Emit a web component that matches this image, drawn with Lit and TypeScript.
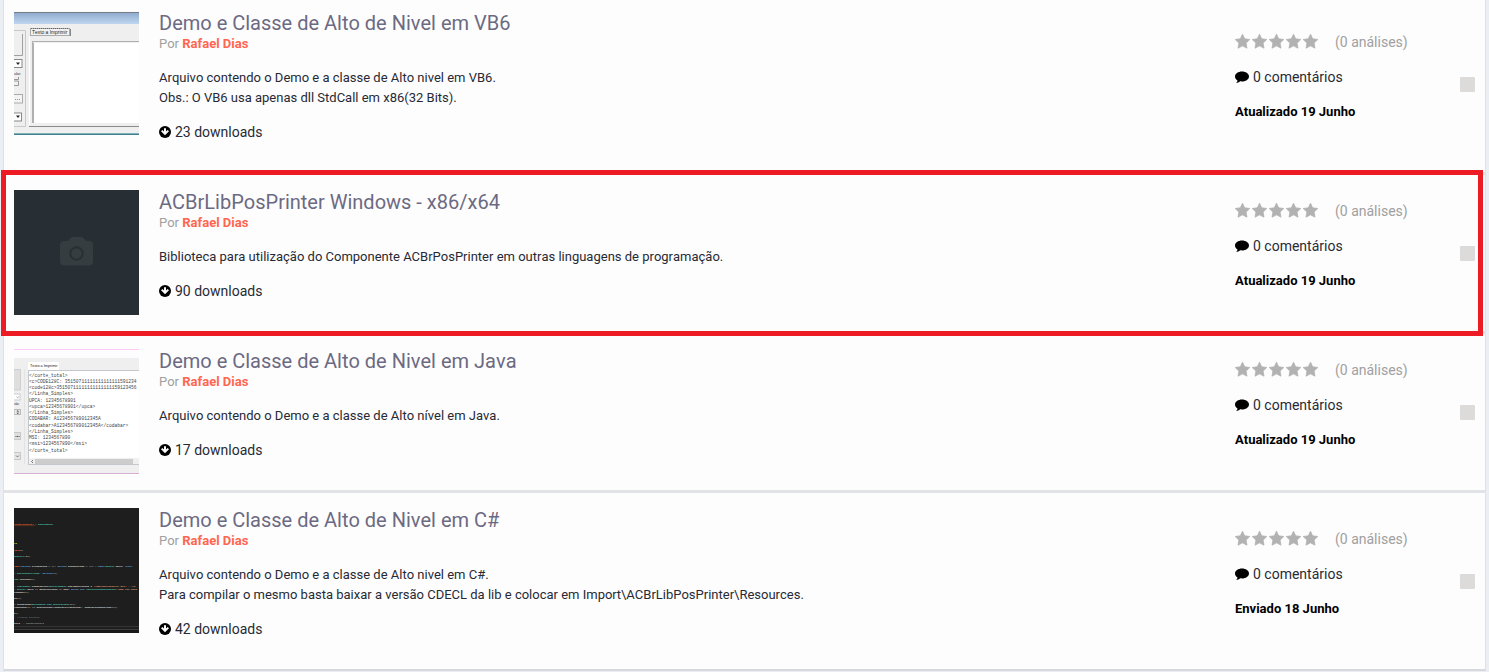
import { LitElement, html, svg, css, nothing } from "lit";
import { customElement, property } from "lit/decorators.js";

type Cover = "form" | "empty" | "markup" | "code";

interface FileEntry {
  title: string;
  author: string;
  text: string[];
  downloads: number;
  date: string;
  cover: Cover;
  marked?: boolean;
}

const FILES: FileEntry[] = [
  {
    title: "Demo e Classe de Alto de Nivel em VB6",
    author: "Rafael Dias",
    text: ["Arquivo contendo o Demo e a classe de Alto nivel em VB6.", "Obs.: O VB6 usa apenas dll StdCall em x86(32 Bits)."],
    downloads: 23,
    date: "Atualizado 19 Junho",
    cover: "form",
  },
  {
    title: "ACBrLibPosPrinter Windows - x86/x64",
    author: "Rafael Dias",
    text: ["Biblioteca para utilização do Componente ACBrPosPrinter em outras linguagens de programação."],
    downloads: 90,
    date: "Atualizado 19 Junho",
    cover: "empty",
    marked: true,
  },
  {
    title: "Demo e Classe de Alto de Nivel em Java",
    author: "Rafael Dias",
    text: ["Arquivo contendo o Demo e a classe de Alto nível em Java."],
    downloads: 17,
    date: "Atualizado 19 Junho",
    cover: "markup",
  },
  {
    title: "Demo e Classe de Alto de Nivel em C#",
    author: "Rafael Dias",
    text: [
      "Arquivo contendo o Demo e a classe de Alto nivel em C#.",
      "Para compilar o mesmo basta baixar a versão CDECL da lib e colocar em Import\\ACBrLibPosPrinter\\Resources.",
    ],
    downloads: 42,
    date: "Enviado 18 Junho",
    cover: "code",
  },
];

const MARKUP = [
  "</corte_total>",
  "<c>CODE128C: 35150711111111111111591234",
  "<code128c>35150711111111111111159123456",
  "</Linha_Simples>",
  "UPCA: 12345678901",
  "<upca>12345678901</upca>",
  "</Linha_Simples>",
  "CODABAR: A123456789012345A",
  "<codabar>A123456789012345A</codabar>",
  "</Linha_Simples>",
  "MSI: 1234567890",
  "<msi>1234567890</msi>",
  "</corte_total>",
];

const PLAIN = "#e0e0e0";
const TYPE = "#4fd8be";
const WORD = "#62b0f5";
const NAME = "#ff6a2a";
const QUOTE = "#f0a070";

// Each line: baseline, then [colour, text] runs.
const CODE: [number, [string, string][]][] = [
  [17, [[NAME, "rPosPrinter64 "], [PLAIN, ": "], [TYPE, "SafeHandle"]]],
  [36, [["#e0e040", "ns"]]],
  [43, [[NAME, "ndle"], [PLAIN, "()"]]],
  [49, [[TYPE, "IntPtr"], [PLAIN, "(-1);"]]],
  [59, [[NAME, "nter"], [WORD, "(string"], [PLAIN, " eArqConfig = \"\", "], [WORD, "string"], [PLAIN, " eChaveCrypt = \"\") : "], [WORD, "base"], [TYPE, "(IntPtr"], [PLAIN, ".Zero, "], [WORD, "true)"]]],
  [65.5, [[TYPE, "= Dictionary<Type, "], [WORD, "string>"], [PLAIN, "();"]]],
  [72, [[TYPE, "ass"], [PLAIN, ".GetPath();"]]],
  [78.5, [[TYPE, "= LibLoader"], [PLAIN, ".LoadLibrary("], [TYPE, "Environment"], [PLAIN, ".Is64BitProcess ? "], [QUOTE, "\"ACBrPosPrinter64.dll\" : \"AC"]]],
  [81.5, [[TYPE, "= IntPtr"], [PLAIN, ".Zero || minorVersion >= Max) "], [WORD, "throw new "], [TYPE, "ApplicationException"], [QUOTE, "(\"Não foi poss"]]],
  [84.5, [[PLAIN, "rnModel();"]]],
  [91, [[PLAIN, "te();"]]],
  [97, [[PLAIN, "= GetMethod<"], [TYPE, "Delegates.POS_Inicializar"], [PLAIN, ">();"]]],
  [100, [[PLAIN, "reMethod(() => inicializar(ToUTF8(eArqConfig), ToUTF8(eChaveCrypt)));"]]],
  [106, [[PLAIN, "t);"]]],
  [109.5, [["#666", "/ #region Métodos"]]],
  [115.5, [[PLAIN, "ters  "], ["#999", "- Constructors"]]],
];

function formCover() {
  return svg`
    <defs><linearGradient id="bar" x1="0" y1="0" x2="0" y2="1"><stop stop-color="#91acd0"/><stop offset="1" stop-color="#bfd6ef"/></linearGradient></defs>
    <rect width="125" height="124" fill="#efefef"/>
    <rect width="125" height="1" fill="#f8fafb"/>
    <rect y="1" width="125" height="1" fill="#777c82"/>
    <rect y="2" width="125" height="11" fill="url(#bar)"/>
    <path d="M0 19.500H11.500V115.500H0" fill="none" stroke="#c9c9c9"/>
    <path d="M0 44.500H8.500V23" fill="none" stroke="#a0a0a0"/>
    <rect x="-8" y="48.500" width="16" height="8" fill="#fff" stroke="#888"/>
    <path d="M2 51.500h4l-2 2.500z" fill="#222"/>
    <text x="0" y="64" font-size="4" font-family="Liberation Sans" fill="#333">ular</text>
    <path d="M0 68.500H4.500V66M0 74.500H4.500V70H0" fill="none" stroke="#999"/>
    <rect x="-8" y="83.500" width="16.500" height="8.500" fill="#f3f3f3" stroke="#aaa"/>
    <path d="M1 88.500h5" stroke="#999" stroke-dasharray="1 1"/>
    <rect x="-8" y="102" width="15.500" height="8" fill="#fff" stroke="#888"/>
    <path d="M2 104.500h4l-2 2.500z" fill="#222"/>
    <path d="M15 115.500H125" stroke="#8c8c8c"/>
    <path d="M15.500 25V114" stroke="#fff"/>
    <rect x="16.500" y="17.500" width="39" height="7" fill="#f2f2f2" stroke="#aaa"/>
    <path d="M17 17.500H55" stroke="#666" stroke-dasharray="1 1"/>
    <path d="M56.500 18V25" stroke="#888"/>
    <text x="18" y="22.500" font-size="4.900" font-family="Liberation Sans" fill="#222">Texto a Imprimir</text>
    <rect x="20" y="32" width="105" height="80" fill="#fff"/>
    <path d="M18 30.500H125M18.500 31V112M19.500 32V112" stroke="#b0b0b0"/>
    <rect y="122" width="125" height="1" fill="#7fb4ba"/>
    <rect y="123" width="125" height="1" fill="#3f7f8c"/>
    <rect y="124" width="125" height="1" fill="#fcfdff"/>`;
}

function emptyCover() {
  return svg`
    <rect width="125" height="125" fill="#272e34"/>
    <path d="M50 51H54L56 48.500Q57 47 59 47H67Q69 47 70 48.500L72 51H75Q79 51 79 55V71.500Q79 75.500 75 75.500H50Q46 75.500 46 71.500V55Q46 51 50 51Z" fill="#363d41"/>
    <circle cx="62.500" cy="63.500" r="6.200" fill="none" stroke="#272e34" stroke-width="2"/>`;
}

function markupCover() {
  return svg`
    <rect width="125" height="125" fill="#fdfdff"/>
    <rect width="125" height="1" fill="#ffccfa"/>
    <rect y="9" width="125" height="115" fill="#efefef"/>
    <rect x="-2" y="20.500" width="8.500" height="20.500" fill="#dedede" stroke="#cfcfcf"/>
    <rect x="-2" y="45" width="8" height="6" fill="#fff" stroke="#ccc"/>
    <path d="M2.500 47.500l1.200 1.200L5 47.500" fill="none" stroke="#777" stroke-width=".6"/>
    <text x="0" y="56" font-size="3" font-family="Liberation Sans" fill="#222">ular</text>
    <rect x="0" y="60.500" width="6.500" height="5" fill="#e6e6e6" stroke="#bbb"/>
    <path d="M2.500 62.500l1.300-1.300 1.300 1.300zM2.500 63.700l1.300 1.300 1.300-1.300z" fill="#333"/>
    <rect x="-2" y="83.500" width="8.500" height="7" fill="#dedede" stroke="#c8c8c8"/>
    <path d="M1.500 87.500h4" stroke="#555" stroke-dasharray="1 .5"/>
    <rect x="-2" y="103.500" width="8.500" height="7" fill="#e4e4e4" stroke="#c8c8c8"/>
    <path d="M2 106.500l1.500 1.500L5 106.500" fill="none" stroke="#555" stroke-width=".7"/>
    <path d="M10.500 20V115" stroke="#e3e3e3"/>
    <rect x="14" y="13" width="31" height="8" fill="#fff"/>
    <text x="16" y="18" font-size="3.800" font-family="Liberation Sans" fill="#222">Texto a Imprimir</text>
    <rect x="14.500" y="21.500" width="115" height="94" fill="#fff" stroke="#c4c8cc"/>
    ${MARKUP.map((line, i) => svg`<text x="15" y=${27.5 + i * 6.25} font-size="4.600" font-family="Liberation Mono" fill="#444">${line}</text>`)}
    <rect x="15" y="109" width="110" height="6" fill="#f0f0f0"/>
    <rect x="21" y="110" width="98" height="5" fill="#cdcdcd"/>
    <path d="M19 111l-1.500 1.500L19 114" fill="none" stroke="#555" stroke-width=".8"/>
    <rect y="124" width="125" height="1" fill="#d9b0d5"/>`;
}

function codeCover() {
  return svg`
    <rect width="125" height="125" fill="#1e1e1e"/>
    <path d="M0 17.600H21" stroke="#7b3a22" stroke-width=".6"/>
    ${CODE.map(
      ([y, runs]) => svg`<text class="code" x="0" y=${y} font-size="2.500" font-family="Liberation Mono">${runs.map(
        ([color, text]) => svg`<tspan fill=${color}>${text}</tspan>`
      )}</text>`
    )}
    <rect y="118" width="125" height="1" fill="#343434"/>
    <rect y="121" width="125" height="1" fill="#3c3c3c"/>
    <rect y="122" width="125" height="3" fill="#191919"/>`;
}

const COVERS = { form: formCover, empty: emptyCover, markup: markupCover, code: codeCover };

@customElement("file-row")
export class FileRow extends LitElement {
  @property({ attribute: false }) file!: FileEntry;

  static styles = css`
    :host {
      display: block;
      position: relative;
    }
    .row {
      display: flex;
      padding: 15px 10px;
    }
    .cover {
      flex: none;
      width: 125px;
      height: 125px;
      margin-right: 20px;
    }
    .cover svg,
    .icon {
      display: block;
    }
    .code {
      white-space: pre;
      font-weight: 700;
    }
    .main {
      flex: 1;
      min-width: 0;
      padding-bottom: 15px;
    }
    .title {
      margin: 0;
      font-size: 20px;
      line-height: 24px;
      font-weight: 400;
    }
    a {
      text-decoration: none;
      color: inherit;
    }
    .title a {
      color: #6c6a82;
    }
    .by {
      margin: 0;
      line-height: 18px;
      color: #a0a0a0;
    }
    .by a {
      color: #ff6650;
      font-weight: 700;
    }
    .text {
      margin: 15px 0 14px;
      line-height: 20px;
      color: #272a34;
    }
    .count {
      display: flex;
      align-items: center;
      gap: 4px;
      margin: 0;
      font-size: 14px;
      line-height: 20px;
      color: #272a34;
    }
    .stats {
      flex: none;
      align-self: center;
      display: flex;
      flex-direction: column;
      gap: 15px;
      width: 225px;
      padding-bottom: 14px;
    }
    .rating {
      display: flex;
      align-items: center;
      gap: 16px;
      font-size: 14px;
      line-height: 20px;
      color: #a0a0a0;
    }
    .date {
      margin: 0;
      line-height: 20px;
      font-weight: 700;
      color: #000;
    }
    .pick {
      flex: none;
      align-self: center;
      appearance: none;
      width: 15px;
      height: 15px;
      margin: 0;
      border-radius: 1px;
      background: #dddbda;
    }
    .pick:checked {
      background: #6c6a82;
    }
    .mark {
      position: absolute;
      inset: -5px 2px -5px -3px;
      border: 5px solid #ed1c24;
      pointer-events: none;
    }
  `;

  render() {
    const f = this.file;
    return html`
      <article class="row">
        <a class="cover" href="#" aria-label=${f.title}>
          <svg width="125" height="125" viewBox="0 0 125 125" aria-hidden="true">${COVERS[f.cover]()}</svg>
        </a>
        <div class="main">
          <h2 class="title"><a href="#">${f.title}</a></h2>
          <p class="by">Por <a href="#">${f.author}</a></p>
          <p class="text">${f.text.map((line, i) => html`${i ? html`<br />` : nothing}${line}`)}</p>
          <p class="count">
            <svg class="icon" width="12" height="12" viewBox="0 0 12 12" aria-hidden="true">
              <circle cx="6" cy="6" r="6" fill="#000" />
              <path d="M5 2.200H7V5.400L8.600 3.900L10 5.300L6 9.300L2 5.300L3.400 3.900L5 5.400Z" fill="#fdfdfe" />
            </svg>
            ${f.downloads} downloads
          </p>
        </div>
        <div class="stats">
          <div class="rating">
            <svg class="icon" width="84" height="18" viewBox="0 0 84 18" role="img" aria-label="0 de 5">
              ${[0, 17, 34, 51, 68].map(
                (x) => svg`<path transform="translate(${x} 0)" fill="#b2b2b2" stroke="#b2b2b2" stroke-width=".8" stroke-linejoin="round" d="M7.500 1.200L9.700 5.800L14.800 6.500L11.100 10.100L12 15.200L7.500 12.800L3 15.200L3.900 10.100L.200 6.500L5.300 5.800Z"/>`
              )}
            </svg>
            <span>(0 análises)</span>
          </div>
          <a class="count" href="#">
            <svg class="icon" width="14" height="14" viewBox="0 0 14 14" aria-hidden="true">
              <path d="M7 1.500C10.900 1.500 14 3.700 14 6.500S10.900 11.500 7 11.500C6.400 11.500 5.800 11.450 5.200 11.350C4 12.400 2.500 13 1 13C1.800 12.300 2.400 11.400 2.500 10.400C1 9.500 0 8.100 0 6.500C0 3.700 3.100 1.500 7 1.500Z" fill="#000" />
            </svg>
            0 comentários
          </a>
          <p class="date">${f.date}</p>
        </div>
        <input class="pick" type="checkbox" aria-label="Selecionar ${f.title}" />
      </article>
      ${f.marked ? html`<div class="mark"></div>` : nothing}
    `;
  }
}

@customElement("app-root")
export class AppRoot extends LitElement {
  static styles = css`
    :host {
      display: block;
      min-height: 100vh;
      overflow: hidden;
      background: #ebeef3;
      font-family: Roboto, "Liberation Sans", sans-serif;
      font-size: 13px;
      font-kerning: none;
    }
    .list {
      list-style: none;
      margin: -4px 3px 0;
      padding: 0;
      border: 1px solid #dfe1e6;
      border-width: 0 1px 2px;
      border-bottom-color: #d6d8dd;
      background: #fdfdfe;
    }
    .item + .item {
      border-top: 3px solid #e2e3e7;
    }
  `;

  render() {
    return html`<ul class="list">
      ${FILES.map((file) => html`<li class="item"><file-row .file=${file}></file-row></li>`)}
    </ul>`;
  }
}
